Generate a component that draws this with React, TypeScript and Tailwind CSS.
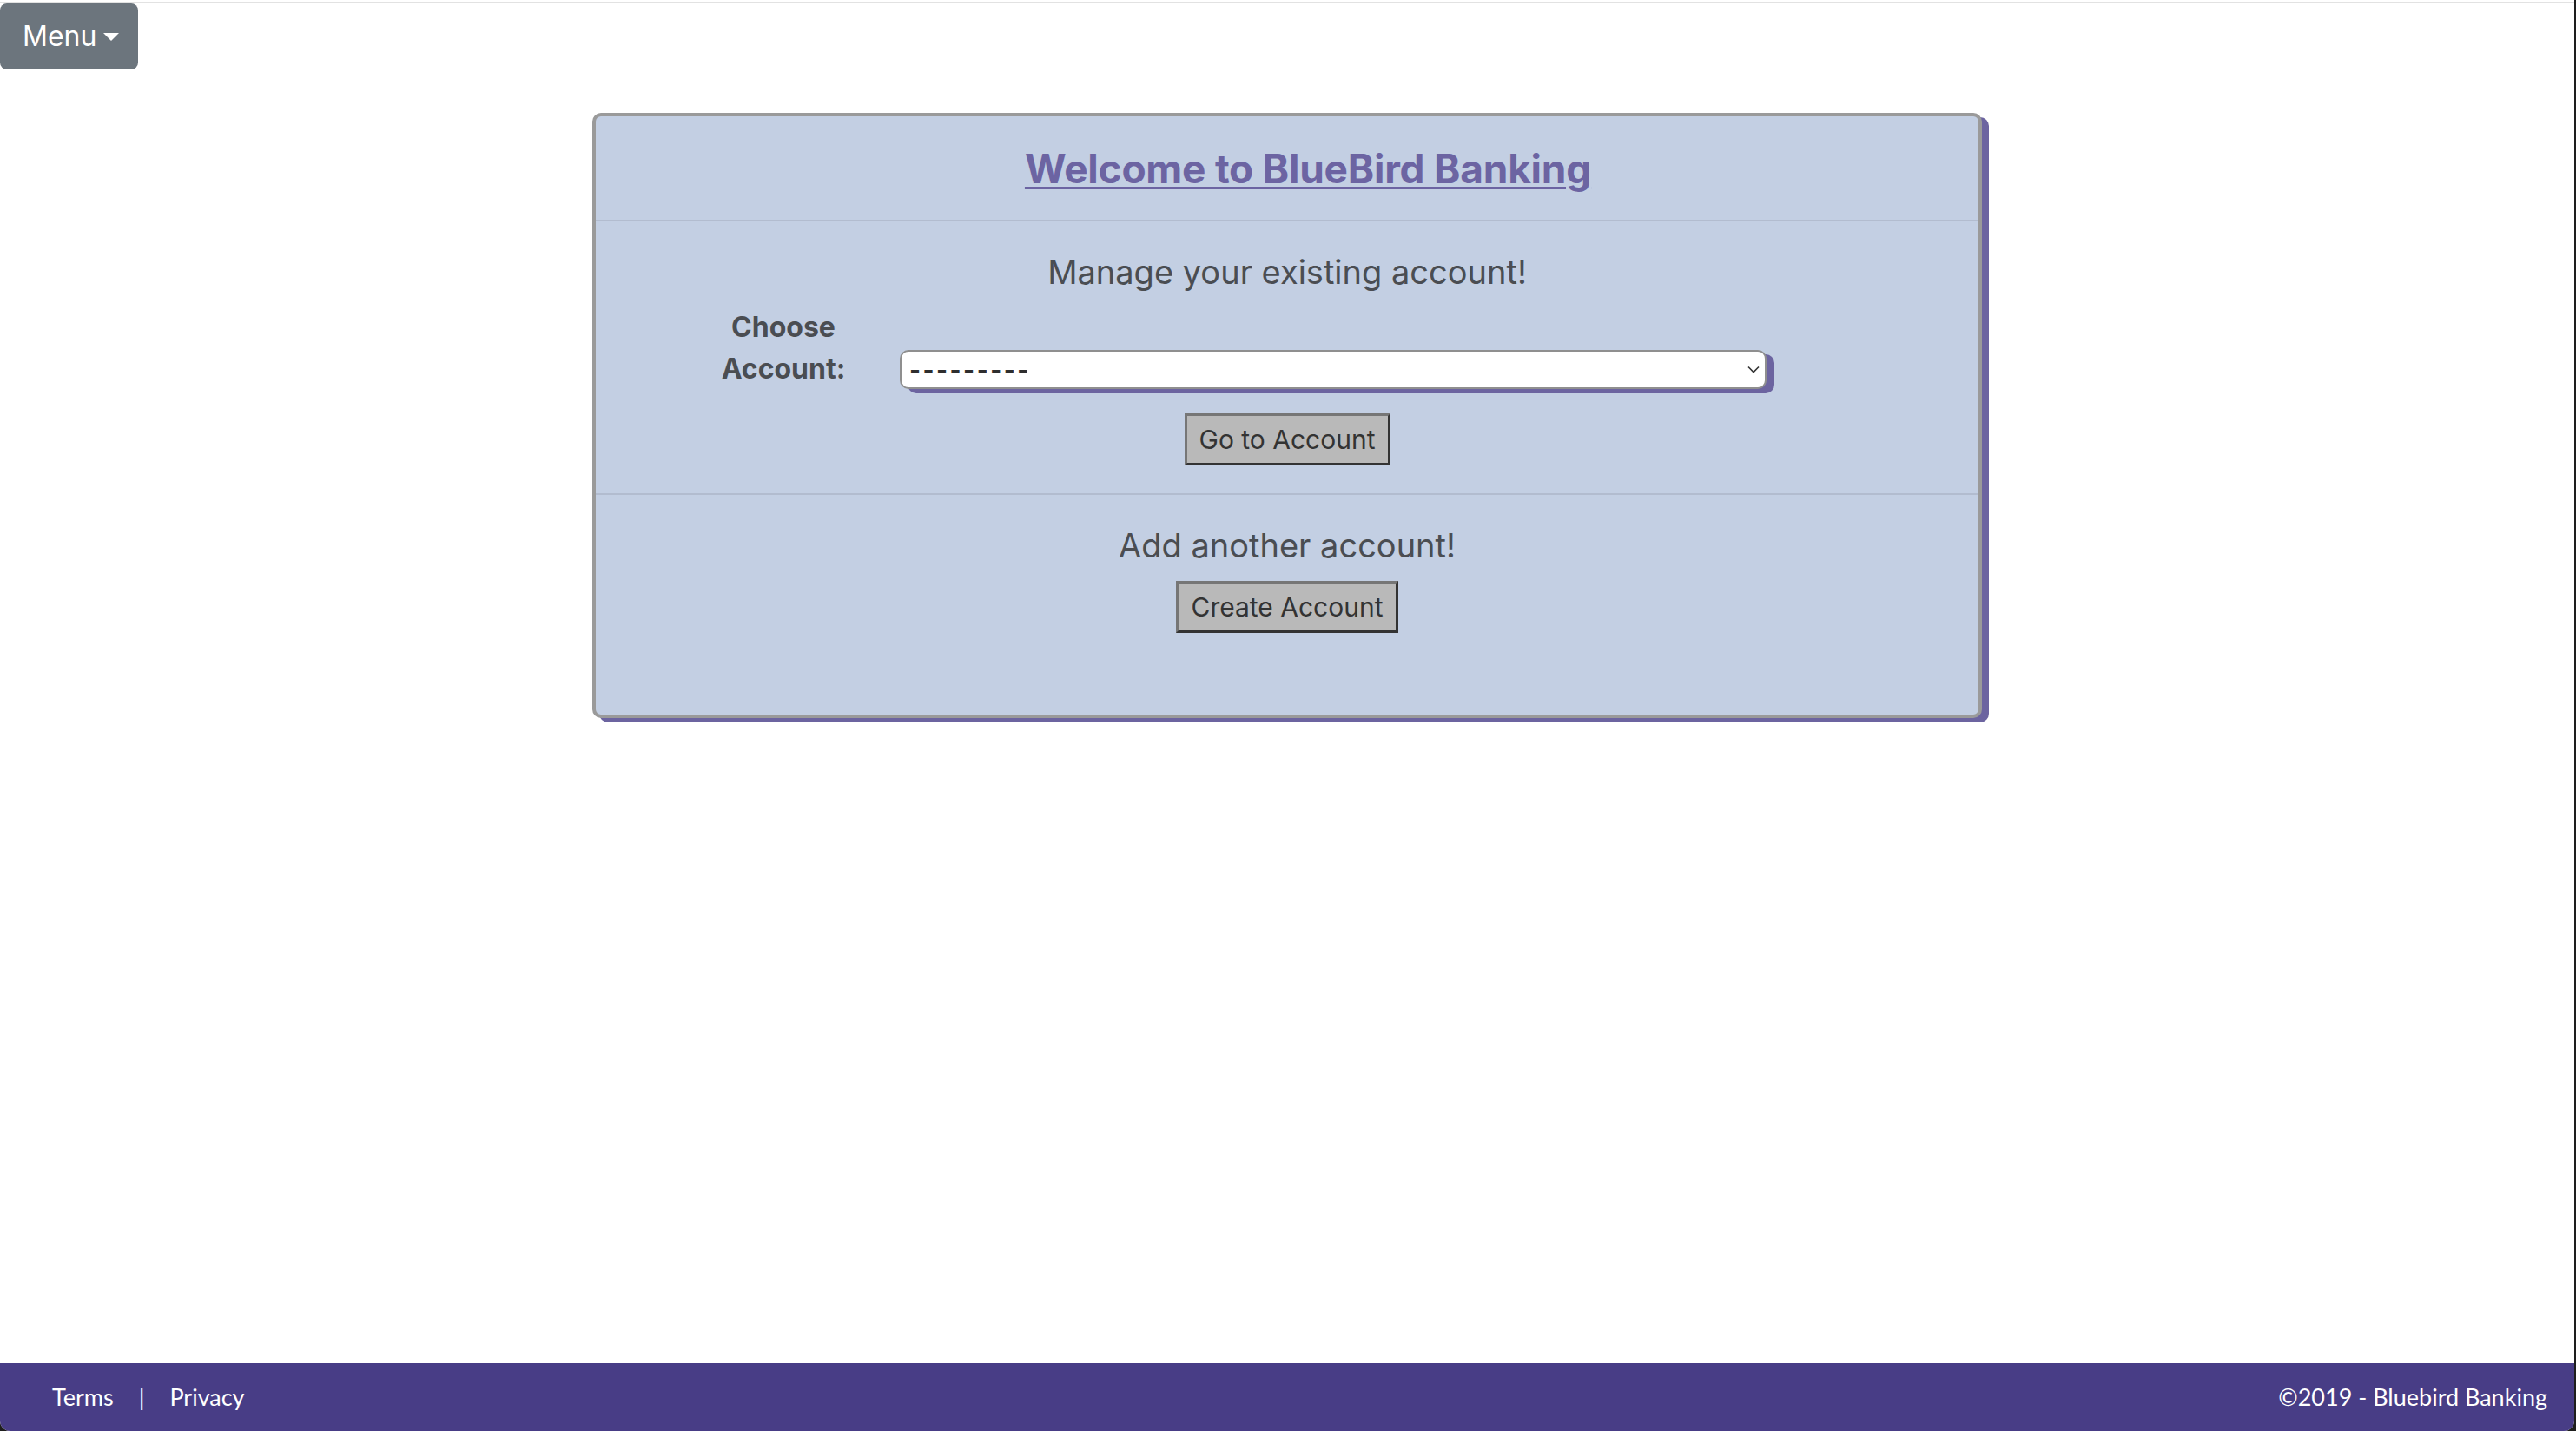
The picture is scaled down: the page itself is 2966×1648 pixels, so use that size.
import React from "react";

const inter = "font-['Inter','Liberation_Sans',sans-serif]";

function Btn({ children }: { children: React.ReactNode }) {
  return (
    <button
      className={`${inter} h-[60px] px-[14px] bg-[#b9b9b9] text-[#333333] text-[30px] leading-none border-[3px] border-t-[#767676] border-l-[#767676] border-b-[#333333] border-r-[#333333]`}
    >
      {children}
    </button>
  );
}

export default function App() {
  return (
    <div className="w-full h-[1648px] bg-[#1e1e1e] overflow-hidden">
      <div className="w-[2964px] h-[1648px] bg-white rounded-b-[12px] overflow-hidden flex flex-col">
        <div className="pt-[2px]">
          <div className="h-[2px] bg-[#e2e2e2]" />
        </div>
        <div className="flex">
          <button
            className={`${inter} h-[76px] w-[159px] bg-[#6c757d] rounded-[8px] text-white text-[32px] leading-none flex items-center pl-[26px]`}
          >
            <span>Menu</span>
            <span className="ml-[8px] w-0 h-0 border-t-[9px] border-t-white border-l-[9px] border-l-transparent border-r-[9px] border-r-transparent" />
          </button>
        </div>

        <div className="mt-[50px] mx-auto w-[1600px] border-[4px] border-[#9a9a9a] rounded-[10px] bg-[#c3cfe3] shadow-[8px_5px_0_#6c64a0]">
          <div className="h-[121px] flex items-center justify-center pl-[48px] border-b-2 border-[#b2bccf]">
            <span
              className={`${inter} text-[46px] leading-none font-bold text-[#6c64a2] underline decoration-[3px] underline-offset-[4px] tracking-[-0.005em]`}
            >
              Welcome to BlueBird Banking
            </span>
          </div>

          <div className="pt-[39px] pb-[32px] flex flex-col items-center border-b-2 border-[#b2bccf]">
            <div className={`${inter} text-[38px] leading-none text-[#4a4d52]`}>
              Manage your existing account!
            </div>
            <div className="self-stretch mt-[21px] pl-[116px] flex items-end">
              <div
                className={`${inter} w-[200px] text-center text-[32px] leading-[48px] font-bold text-[#4a4d52]`}
              >
                Choose
                <br />
                Account:
              </div>
              <div className="ml-[34px] mb-[1px] w-[998px] h-[45px] bg-white border-2 border-[#8f8f8f] rounded-[10px] shadow-[9px_5px_0_#6c64a0] flex items-center justify-between pl-[9px] pr-[6px]">
                <span className={`${inter} text-[28px] leading-none font-semibold text-[#2e2e2e] tracking-[2.5px]`}>
                  ---------
                </span>
                <svg width="14" height="9" viewBox="0 0 14 9">
                  <path d="M1 1.5 L7 7.5 L13 1.5" fill="none" stroke="#333" strokeWidth="1.6" />
                </svg>
              </div>
            </div>
            <div className="mt-[27px]">
              <Btn>Go to Account</Btn>
            </div>
          </div>

          <div className="pt-[39px] pb-[94px] flex flex-col items-center">
            <div className={`${inter} text-[38px] leading-none text-[#4a4d52]`}>
              Add another account!
            </div>
            <div className="mt-[22px]">
              <Btn>Create Account</Btn>
            </div>
          </div>
        </div>

        <div className="flex-1" />

        <footer className="h-[78px] bg-[#483d86] flex items-center justify-between pl-[60px] pr-[31px] font-['Lato','Liberation_Sans',sans-serif] text-[27px] text-white">
          <div className="flex items-center">
            <span>Terms</span>
            <span className="mx-[29px]">|</span>
            <span>Privacy</span>
          </div>
          <div>©2019 - Bluebird Banking</div>
        </footer>
      </div>
    </div>
  );
}
